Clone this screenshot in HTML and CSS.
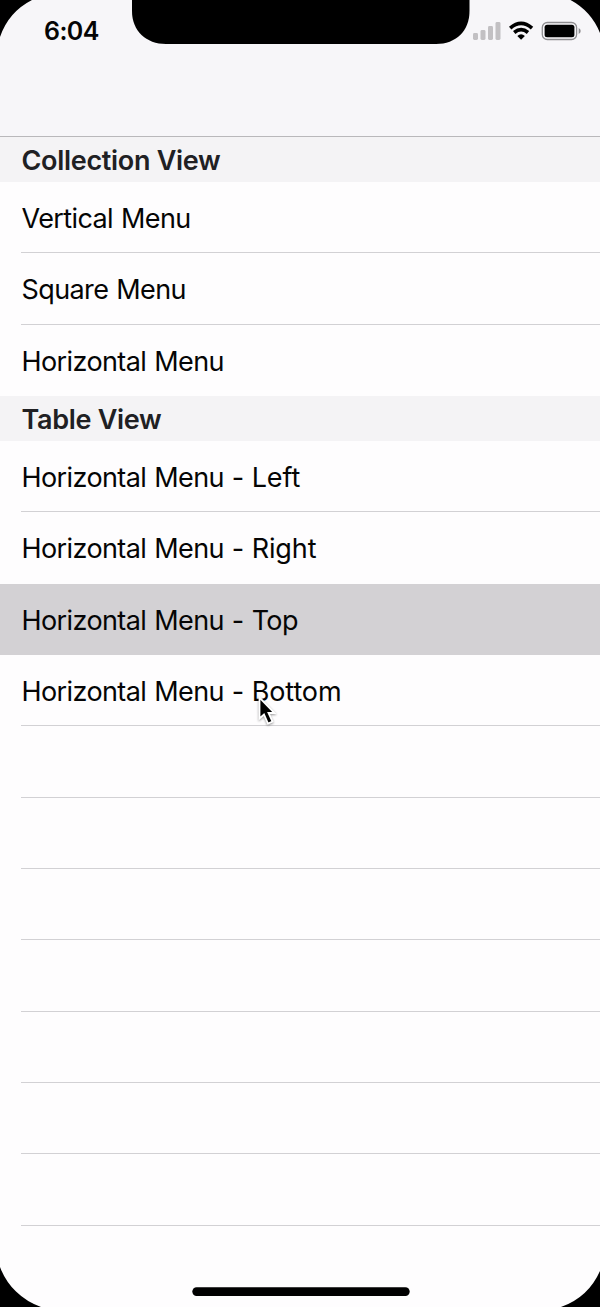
FILE: index.html
```html
<!DOCTYPE html>
<html lang="en">
<head>
<meta charset="utf-8">
<title>Menus</title>
<link rel="stylesheet" href="styles.css">
</head>
<body>
<div class="phone">
  <header class="nav">
    <div class="status">
      <span class="time">6:04</span>
      <svg class="indicators" width="110" height="20" viewBox="472 21 110 20">
        <g fill="#c2c0c3">
          <rect x="473" y="33" width="5" height="7" rx="1.4"/>
          <rect x="480.5" y="30" width="5" height="10" rx="1.4"/>
          <rect x="488" y="26" width="5" height="14" rx="1.4"/>
          <rect x="495.5" y="22" width="5" height="18" rx="1.4"/>
        </g>
        <g fill="none" stroke="#000" stroke-width="3.7">
          <path d="M510.200 28.100Q521.100 18.700 532 28.100"/>
          <path d="M514.200 32.500Q521.100 26.700 528 32.500"/>
        </g>
        <path d="M517.300 36Q521.100 32.700 524.900 36L521.100 39.800Z"/>
        <rect x="542.300" y="22.500" width="34.300" height="17" rx="5" fill="#f8f7fa" stroke="#8e8d90" stroke-width="1.300"/>
        <rect x="544.600" y="24.700" width="29.800" height="12.600" rx="2.500"/>
        <path d="M578.700 27.900Q580.700 29 580.700 31T578.700 34.100Z" fill="#8e8d90"/>
      </svg>
    </div>
  </header>
  <main class="list">
    <h2 class="section">Collection View</h2>
    <ul class="rows">
      <li class="row">Vertical Menu</li>
      <li class="row">Square Menu</li>
      <li class="row last">Horizontal Menu</li>
    </ul>
    <h2 class="section">Table View</h2>
    <ul class="rows">
      <li class="row">Horizontal Menu - <span class="side">Left</span></li>
      <li class="row last">Horizontal Menu - <span class="side">Right</span></li>
      <li class="row last selected">Horizontal Menu - Top</li>
      <li class="row">Horizontal Menu - <span class="side">Bottom</span></li>
      <li class="row"></li>
      <li class="row"></li>
      <li class="row"></li>
      <li class="row"></li>
      <li class="row"></li>
      <li class="row"></li>
      <li class="row"></li>
    </ul>
  </main>
  <svg class="bezel" width="600" height="1307" viewBox="0 0 600 1307">
    <path d="M0 0H32A65 65 0 0 0 0 37Z"/>
    <path d="M600 0H570.500A65 65 0 0 1 600 33Z"/>
    <path d="M0 1307H41A67 67 0 0 1 0 1267Z"/>
    <path d="M600 1307H561A67 67 0 0 0 600 1271Z"/>
    <path d="M132 0V11C132 31 146 44 166 44H436C456 44 469.500 31 469.500 11V0Z"/>
    <rect x="192.300" y="1287.300" width="217.400" height="8.600" rx="4.300"/>
  </svg>
  <svg class="pointer" width="24" height="34" viewBox="0 0 24 34">
    <path d="M3.500 3.500V24.500L8 20.500L12 29.500L16.500 27.500L12.500 19H18.500Z" fill="#000" stroke="#fff" stroke-width="1.800"/>
  </svg>
</div>
</body>
</html>
```
FILE: styles.css
```css
* { box-sizing: border-box; }

body {
  margin: 0;
  font-family: Inter, "Liberation Sans", sans-serif;
  color: #050505;
  background: #fefdfe;
}

.phone {
  position: relative;
  height: 1307px;
  overflow: hidden;
}

.nav {
  height: 137px;
  padding: 21px 18px 0 44px;
  background: #f7f6f9;
  border-bottom: 1px solid #b9b8bb;
}

.status {
  display: flex;
  justify-content: space-between;
  height: 20px;
}

.time {
  font-size: 25px;
  font-weight: 600;
  line-height: 20px;
  letter-spacing: -0.6px;
}

.section {
  margin: 0;
  height: 45px;
  padding-left: 21.5px;
  background: #f4f3f5;
  color: #202023;
  font-size: 27px;
  font-weight: 600;
  line-height: 47px;
  letter-spacing: -0.3px;
}

.rows {
  margin: 0;
  padding: 0;
  list-style: none;
}

.row {
  height: 71.33px;
  padding-left: 21.5px;
  font-size: 27px;
  line-height: 73.4px;
  letter-spacing: -0.6px;
  word-spacing: 1px;
  background: linear-gradient(#d2d1d4, #d2d1d4) 21px 100% / 100% 1px no-repeat;
}

.side { letter-spacing: -0.1px; }

.last { background: none; }

.selected { background: #d3d1d4; }

.bezel {
  position: absolute;
  inset: 0;
}

.pointer {
  position: absolute;
  left: 256px;
  top: 694px;
  filter: drop-shadow(0 1px 1px rgba(0, 0, 0, 0.4));
}
```
